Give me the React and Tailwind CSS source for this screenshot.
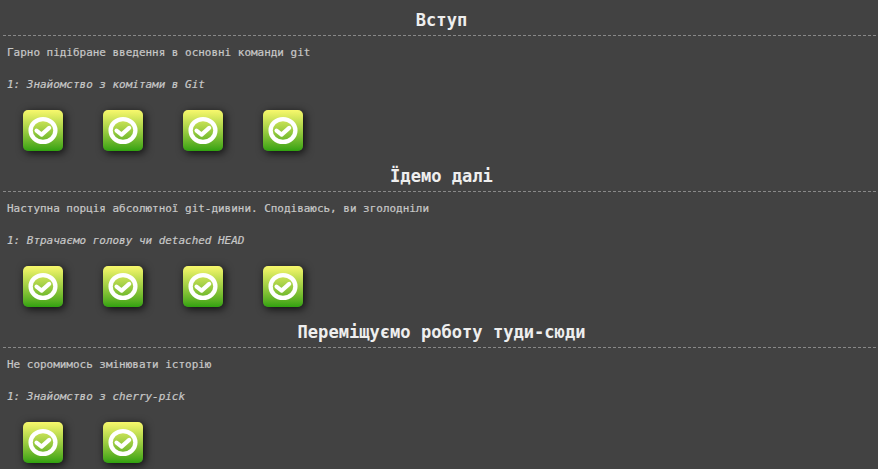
const sections = [
  { title: "Вступ", about: "Гарно підібране введення в основні команди git", level: "1: Знайомство з комітами в Git", count: 4 },
  { title: "Їдемо далі", about: "Наступна порція абсолютної git-дивини. Сподіваюсь, ви зголодніли", level: "1: Втрачаємо голову чи detached HEAD", count: 4 },
  { title: "Переміщуємо роботу туди-сюди", about: "Не соромимось змінювати історію", level: "1: Знайомство з cherry-pick", count: 2 },
];

function LevelIcon() {
  return (
    <button className="h-[41px] w-10 rounded-[5px] bg-linear-to-b from-[#f8f86c] to-[#2fa20f] shadow-[2px_2px_8px_rgba(0,0,0,0.8)]">
      <svg viewBox="0 0 40 41" className="block h-[41px] w-10" fill="none" stroke="#fff">
        <ellipse cx="20" cy="20.5" rx="12.4" ry="11.4" strokeWidth="4.3" />
        <path d="M13.5 20.6l5.1 4 7.6-6.7" strokeWidth="4.1" strokeLinecap="round" strokeLinejoin="round" />
      </svg>
    </button>
  );
}

function Section({ title, about, level, count }) {
  return (
    <section className="h-[156px] shrink-0">
      <h3 className="mr-[2px] ml-[3px] h-9 border-b border-dashed border-[#888] pt-[3px] pl-[4px] text-center text-[17.08px] leading-[34px] font-bold text-[#eee]">{title}</h3>
      <p className="h-8 pl-[7px] leading-[34px] [-webkit-text-stroke:0.2px_#c8c8c8]">{about}</p>
      <p className="h-8 pl-[7px] leading-[34px] italic [-webkit-text-stroke:0.2px_#c8c8c8]">{level}</p>
      <div className="flex gap-10 pt-[10px] pl-[23px]">
        {Array.from({ length: count }, (_, i) => <LevelIcon key={i} />)}
      </div>
    </section>
  );
}

export default function App() {
  return (
    <main className="flex h-[469px] w-[878px] flex-col overflow-hidden bg-[#424242] font-['DejaVu_Sans_Mono',monospace] text-[10.96px] whitespace-nowrap text-[#c8c8c8]">
      {sections.map((s) => <Section key={s.title} {...s} />)}
    </main>
  );
}
